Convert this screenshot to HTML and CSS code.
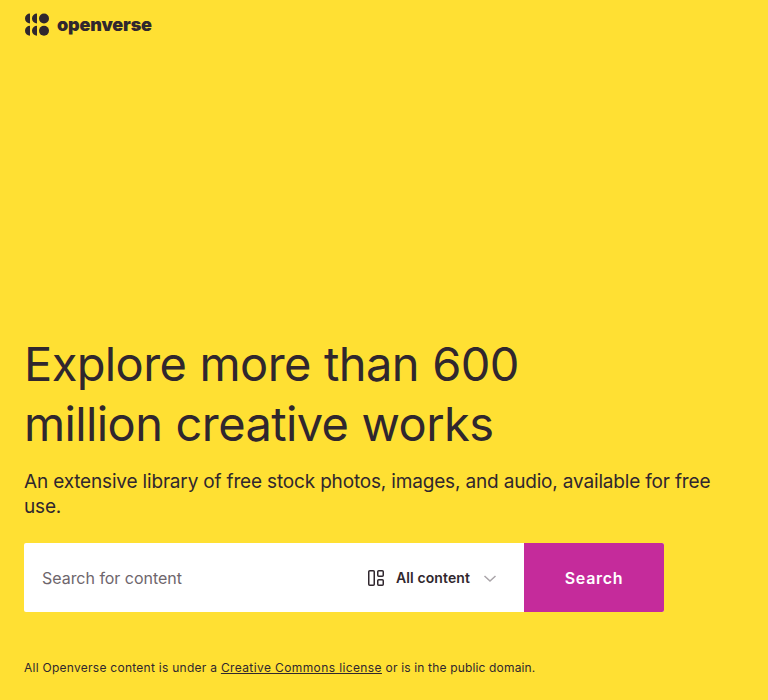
FILE: index.html
```html
<!DOCTYPE html>
<html lang="en">
<head>
<meta charset="utf-8">
<title>Openverse</title>
<link rel="stylesheet" href="styles.css">
</head>
<body>
<header class="header">
  <a class="brand" href="#">
    <svg class="mark" width="24" height="24" viewBox="0 0 24 24" fill="currentColor" aria-hidden="true">
      <path d="M5 .5v10A5 5 0 0 1 5 .5zM12 .5v10A5 5 0 0 1 12 .5z"/>
      <circle cx="19" cy="5.500" r="5"/>
      <path d="M5 12.700v10a5 5 0 0 1 0-10zM12 12.700v10a5 5 0 0 1 0-10z"/>
      <circle cx="19" cy="17.700" r="5"/>
    </svg>
    <span class="wordmark">openverse</span>
  </a>
</header>
<main class="hero">
  <h1 class="title">Explore more than 600 million creative works</h1>
  <p class="subtitle">An extensive library of free stock photos, images, and audio, available for free use.</p>
  <form class="search">
    <input class="field" type="search" placeholder="Search for content">
    <button class="type" type="button">
      <svg width="24" height="24" viewBox="0 0 24 24" fill="none" stroke="currentColor" stroke-width="1.500" aria-hidden="true">
        <rect x="4.750" y="4.750" width="5.500" height="14.500" rx="1"/>
        <rect x="13.750" y="4.750" width="5.500" height="5.500" rx="1"/>
        <rect x="13.750" y="13.750" width="5.500" height="5.500" rx="1"/>
      </svg>
      <span class="label">All content</span>
      <svg class="caret" width="24" height="24" viewBox="0 0 24 24" fill="none" stroke="currentColor" stroke-width="1.500" aria-hidden="true"><path d="m6.500 10 5.500 5 5.500-5"/></svg>
    </button>
    <button class="submit" type="button">Search</button>
  </form>
  <p class="note">All Openverse content is under a <a href="#">Creative Commons license</a> <span class="note-end">or is in the public domain.</span></p>
</main>
</body>
</html>
```
FILE: styles.css
```css
* { box-sizing: border-box; }
body { margin: 0; height: 700px; display: flex; flex-direction: column; background: #ffe033; color: #30272e; font-family: Inter, sans-serif; overflow: hidden; }
.header { padding: 13px 25px 0; }
.brand { display: flex; align-items: center; gap: 8px; height: 24px; color: inherit; text-decoration: none; }
.wordmark { font-size: 18px; font-weight: 900; letter-spacing: -0.18px; line-height: 24px; }
.hero { margin-top: auto; padding: 0 24px 24px; }
.title { width: 550px; margin: 0; font-size: 47px; font-weight: 400; letter-spacing: -0.62px; word-spacing: 0.7px; line-height: 60px; }
.subtitle { margin: 15px 0 0; font-size: 19px; letter-spacing: -0.17px; line-height: 25px; }
.search { display: flex; width: 640px; height: 69px; margin: 24px 0 0; border-radius: 2px; overflow: hidden; background: #fff; }
.field { flex: 1; min-width: 0; border: 0; padding: 0 0 0 18px; background: none; font: 400 16px Inter, sans-serif; letter-spacing: -0.03px; outline: 0; }
.field::placeholder { color: #6e666c; opacity: 1; }
.type { display: flex; align-items: center; border: 0; padding: 0 22px 0 0; background: none; color: #30272e; font: 600 14px Inter, sans-serif; letter-spacing: 0.1px; }
.label { margin: 0 8px; }
.caret { color: #aaa5a9; }
.submit { width: 140px; border: 0; padding: 0; background: #c52b9b; color: #fff; font: 600 16px Inter, sans-serif; letter-spacing: 0.7px; }
.note { margin: 48px 0 0; font-size: 12px; letter-spacing: 0.265px; line-height: 16px; }
.note a { color: inherit; letter-spacing: 0.39px; }
.note-end { letter-spacing: 0.16px; }
```
